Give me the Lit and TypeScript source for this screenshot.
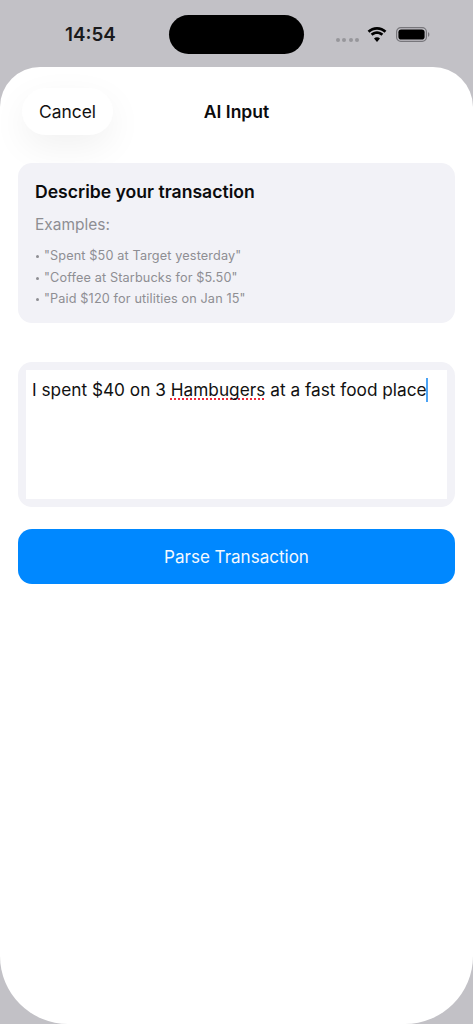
import { LitElement, html, css } from "lit";
import { customElement } from "lit/decorators.js";

@customElement("app-root")
export class AppRoot extends LitElement {
  static styles = css`
    :host { display: block; width: 473px; height: 1024px; background: #c2c1c6; overflow: hidden; font-family: Inter, "Noto Sans", sans-serif; color: #0b0b0d; }
    * { box-sizing: border-box; }
    .page { display: flex; flex-direction: column; height: 1024px; }
    .status { height: 67px; flex: none; display: grid; grid-template-columns: 169px 135px 1fr; padding-top: 15px; align-items: start; }
    .time { font-size: 18.800px; font-weight: 600; line-height: 40px; padding-left: 65px; white-space: nowrap; color: #1a1a1c; }
    .island { height: 39px; border-radius: 20px; background: #000; }
    .sys { display: flex; align-items: flex-start; height: 39px; padding-left: 32px; }
    .dots { display: flex; gap: 2.400px; margin-top: 22.500px; }
    .dots i { width: 4px; height: 4px; border-radius: 50%; background: #97969b; }
    .wifi { margin: 12px 0 0 8px; display: block; }
    .bat { margin: 12px 0 0 9px; display: block; }
    .sheet { flex: 1; background: #fff; border-radius: 40px 40px 68px 68px; padding: 21px 18px 0; display: flex; flex-direction: column; }
    .head { display: grid; grid-template-columns: 1fr auto 1fr; align-items: center; height: 47px; padding-left: 4px; }
    .cancel { justify-self: start; width: 91px; height: 47px; border-radius: 24px; background: #fff; box-shadow: 0 12px 36px rgba(0,0,0,.06); display: flex; align-items: center; justify-content: center; font-size: 17.400px; color: #111; }
    .title { font-size: 17.500px; font-weight: 600; line-height: 47px; margin-right: 4px; }
    .card { margin-top: 28px; height: 160px; background: #f2f2f7; border-radius: 14px; padding: 17px 17px 0; }
    .card h2 { margin: 0; font-size: 17.600px; font-weight: 600; line-height: 24px; }
    .ex { margin-top: 10px; font-size: 15.500px; line-height: 22px; color: #8e8e93; }
    .list { margin-top: 9px; display: flex; flex-direction: column; font-size: 12.700px; letter-spacing: .13px; line-height: 21.700px; color: #8e8e93; }
    .li { display: flex; align-items: center; white-space: nowrap; }
    .li b { flex: none; width: 3px; height: 3px; border-radius: 50%; background: #8e8e93; margin: 1px 5px 0 1px; }
    .input { margin-top: 39px; height: 145px; padding: 8px; border-radius: 14px; background: #f2f2f7; }
    .field { height: 100%; background: #fff; padding: 7px 0 0 6px; font-size: 17.250px; line-height: 26px; white-space: nowrap; color: #111; display: flex; }
    .field u { text-decoration: underline dotted #ee2a3c 2px; text-decoration-skip-ink: none; text-underline-offset: 2px; }
    .caret { display: block; flex: none; width: 2px; height: 24px; margin: 1px 0 0 -1px; background: #4ba3f5; }
    .btn { margin-top: 22px; height: 55px; border-radius: 14px; background: #0088ff; color: #f4f9ff; font-size: 17.050px; display: flex; align-items: center; justify-content: center; }
  `;

  render() {
    return html`<div class="page">
      <div class="status">
        <div class="time">14:54</div>
        <div class="island"></div>
        <div class="sys">
          <div class="dots"><i></i><i></i><i></i><i></i></div>
          <svg class="wifi" width="20" height="15" viewBox="0 0 20 15"><path fill="#000" d="M10 2.700c2.900 0 5.500 1.100 7.500 3l1.900-2C16.900 1.400 13.600 0 10 0S3.100 1.400.600 3.700l1.900 2C4.500 3.800 7.100 2.700 10 2.700zM10 7c1.700 0 3.200.6 4.400 1.700l1.900-2C14.600 5.100 12.400 4.200 10 4.200S5.400 5.100 3.700 6.700l1.900 2C6.800 7.600 8.300 7 10 7zM10 10.300c-1.200 0-2.200.4-3 1.100L10 15l3-3.600c-.8-.7-1.800-1.100-3-1.100z"/></svg>
          <svg class="bat" width="34" height="15" viewBox="0 0 34 15"><rect x=".6" y=".6" width="29.800" height="13.800" rx="4.200" fill="none" stroke="#77767b" stroke-width="1.200"/><rect x="2.400" y="2.400" width="26.200" height="10.200" rx="2.800" fill="#000"/><path d="M32 5.200c.9.300 1.400 1.200 1.400 2.300s-.5 2-1.400 2.300z" fill="#77767b"/></svg>
        </div>
      </div>
      <div class="sheet">
        <div class="head">
          <div class="cancel">Cancel</div>
          <div class="title">AI Input</div>
          <div></div>
        </div>
        <div class="card">
          <h2>Describe your transaction</h2>
          <div class="ex">Examples:</div>
          <div class="list">
            <div class="li"><b></b>"Spent $50 at Target yesterday"</div>
            <div class="li"><b></b>"Coffee at Starbucks for $5.50"</div>
            <div class="li"><b></b>"Paid $120 for utilities on Jan 15"</div>
          </div>
        </div>
        <div class="input"><div class="field"><span>I spent $40 on 3 <u>Hambugers</u> at a fast food place</span><span class="caret"></span></div></div>
        <div class="btn">Parse Transaction</div>
      </div>
    </div>`;
  }
}
